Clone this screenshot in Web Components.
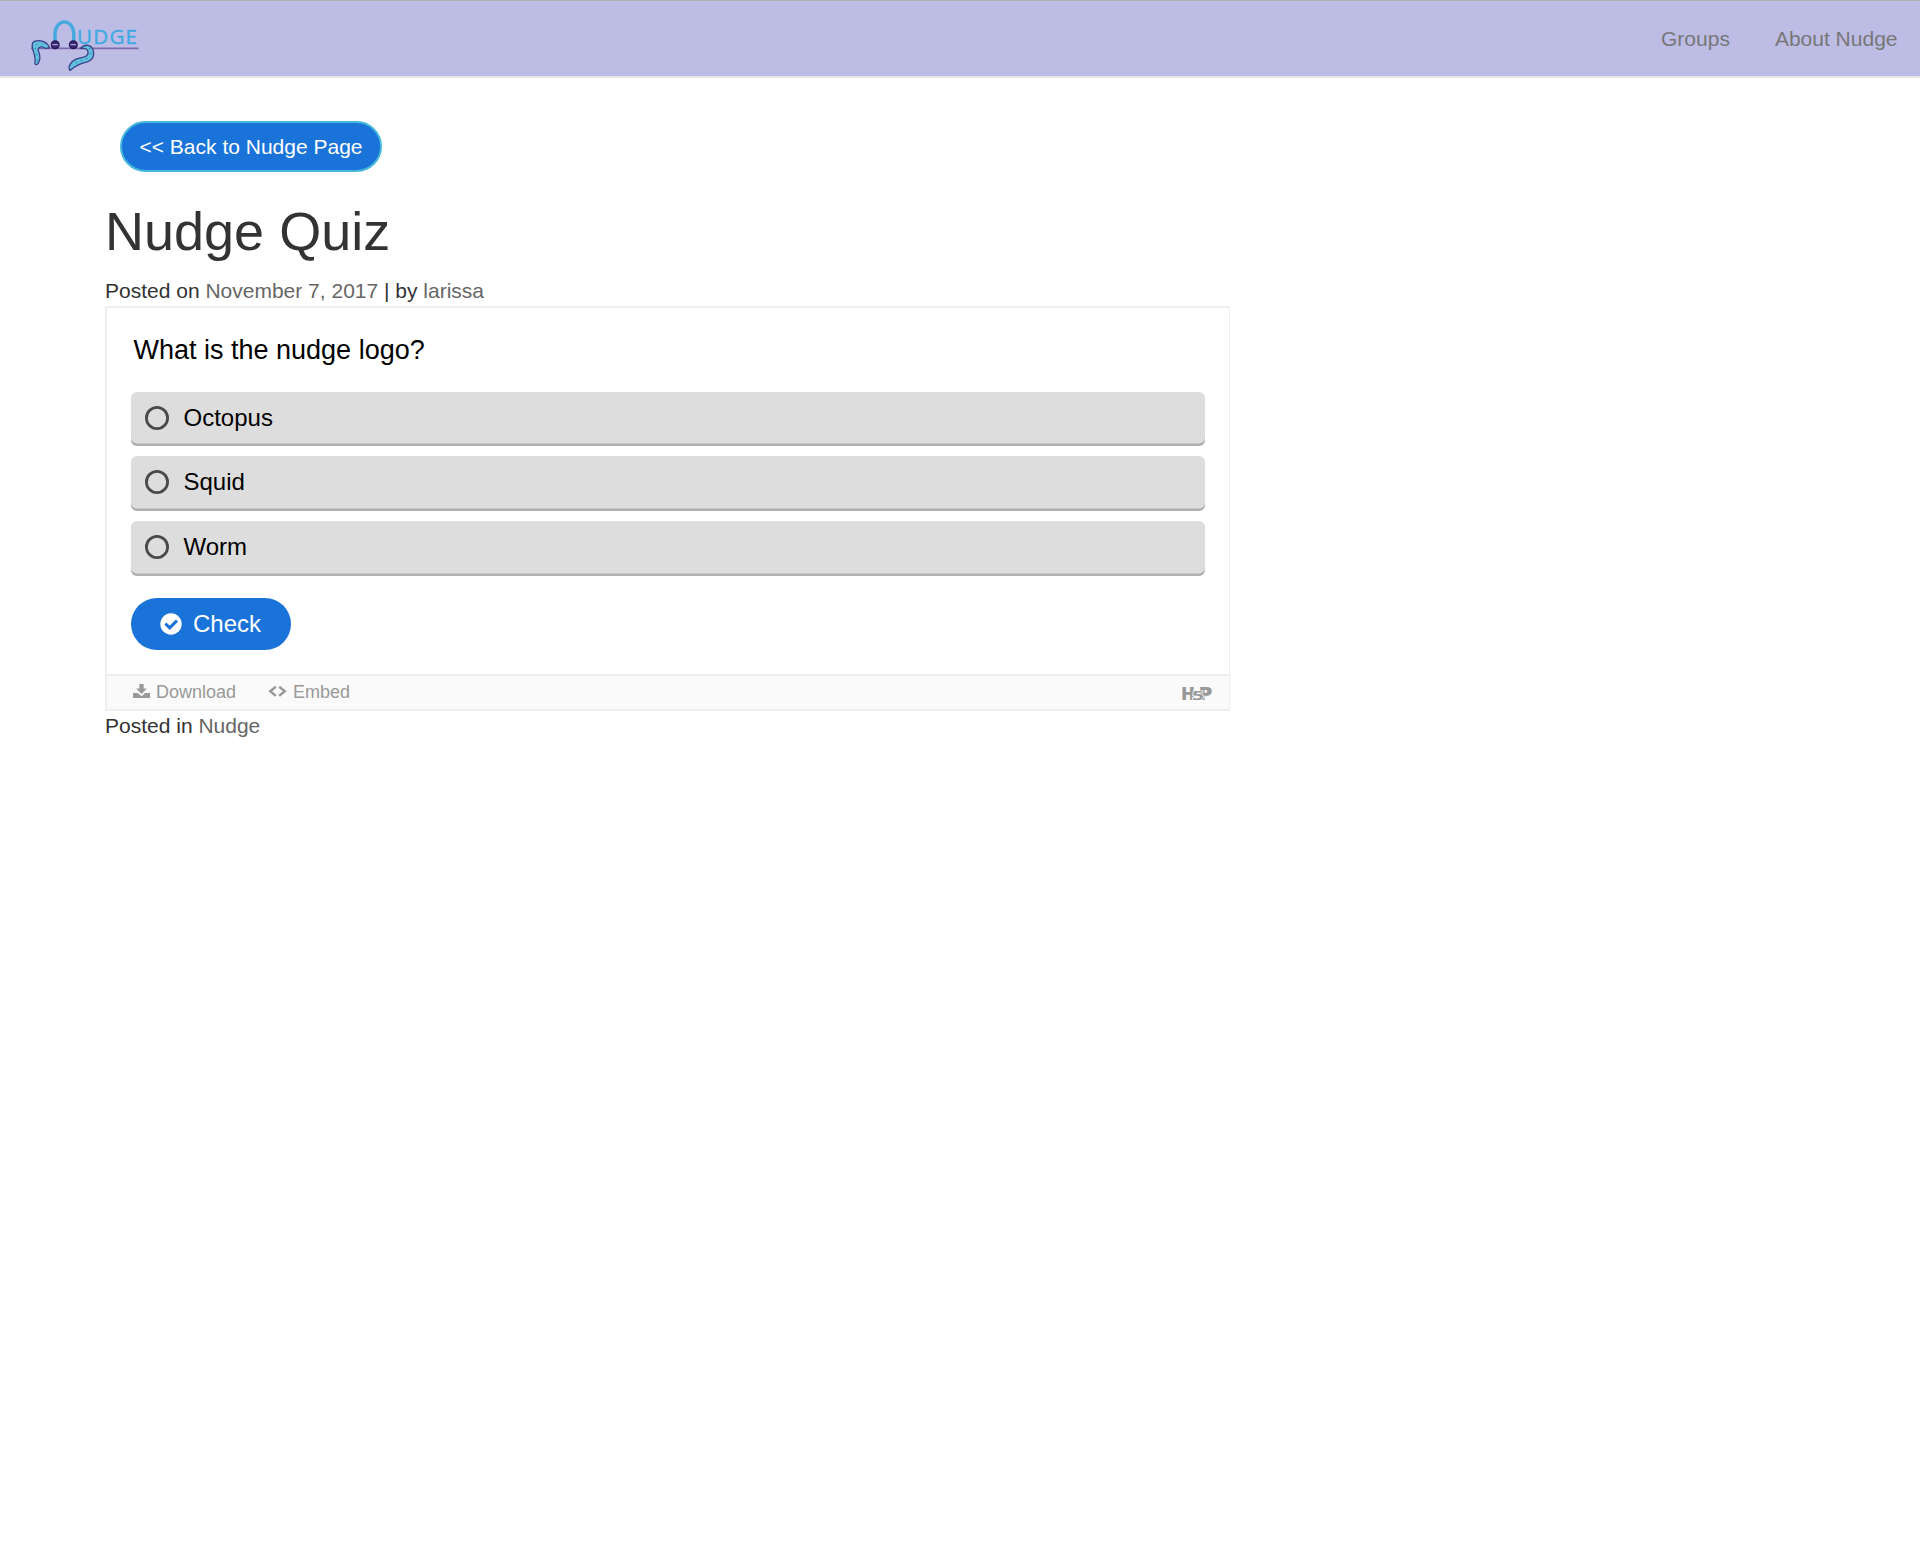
<!DOCTYPE html>
<html lang="en"><head><meta charset="utf-8"><title>Nudge Quiz</title>
<style>
html,body{margin:0;background:#fff}
body{font:21px/30px "Liberation Sans",Arial,sans-serif;color:#333;min-height:1554px}
</style></head><body>
<nudge-page></nudge-page>
<script>
const define=(name,css,html)=>customElements.define(name,class extends HTMLElement{
  connectedCallback(){
    if(this.shadowRoot)return;
    this.attachShadow({mode:'open'}).innerHTML='<style>*{box-sizing:border-box}'+css+'</style>'+html;
  }
});

define('nudge-logo',':host{display:block;width:130px;height:70px}svg{display:block}',`
<svg width="130" height="70" viewBox="20 6 130 70" fill="none">
  <path d="M31 48.3H138.5" stroke="#7d6bb0" stroke-width="1.8"/>
  <path d="M55 42V35C55 17.5 73.8 17.5 73.8 35V42" stroke="#45a9e0" stroke-width="3.4"/>
  <text x="77" y="43.5" font-family="Open Sans, sans-serif" font-size="20.5" textLength="60" fill="#3fa9e3" stroke="#3fa9e3" stroke-width=".4">UDGE</text>
  <g fill="#62c0de" stroke="#3a4189" stroke-width="1.3" stroke-linejoin="round">
    <path d="M49.5 47.8C47 42 41 39.6 35 41.1C31.4 42 31.8 46 33 50C34.5 55 36 59 34.8 62.5C34.8 65 36.5 65.2 38 63.5C40.8 60 39.8 54 38 49.5C38.5 46.3 42.5 46 45 48.3Z"/>
    <path d="M80.5 48.5C84 44 90.5 44 92.9 49.5C95.5 57 91.5 61 84.5 62.7C77.5 64.5 74 67 70 70.4C67.5 67.5 70.5 61.5 75.5 59.3C81.5 57 89 57.5 88 51.5C87 48 84 48.3 80.5 48.5Z"/>
  </g>
  <path d="M36 44L37 45M35 48L36 49M36 54L37 55M37 60L38 61M42 44L43 44.5M89 48L90 49M91 53L90 54M87 58L86 59M82 60L81 61M77 62L76 63" stroke="#3988b8" stroke-width="1.2"/>
  <g fill="#39276f" stroke="#271657" stroke-width="1.2"><circle cx="55.2" cy="44.8" r="3.9"/><circle cx="73.3" cy="44.8" r="3.9"/></g>
  <path d="M52.3 44.6H58M70.4 44.6H76" stroke="#aaa0d6" stroke-width="1.4"/>
</svg>`);

define('nudge-header',`:host{display:flex;height:78px;background:#bdbce4;border-top:1px solid #b2b2b2;border-bottom:2px solid #e7e7e7;justify-content:space-between;padding:5px 22.5px 0 20px}
nav{display:flex;gap:45px;padding-top:18px;color:#777}`,`<nudge-logo></nudge-logo><nav><slot></slot></nav>`);

define('back-button',`:host{display:flex;width:262px;height:51px;margin:43px 0 0 15px;border:2px solid #46b8da;border-radius:26px;background:#1a73d9;color:#fff;align-items:center;justify-content:center;white-space:nowrap}`,`<slot></slot>`);

define('quiz-option',`:host{display:flex;height:55px;align-items:center;gap:14.5px;padding:0 14px 3px;border-radius:6px;background:#ddd;box-shadow:inset 0 -2.5px 0 #b0b0b0;color:#000;font-size:24px}
:host(:first-of-type){height:54px}
svg{flex:none}`,`<svg width="24" height="24" viewBox="0 0 24 24"><circle cx="12" cy="12" r="10.6" fill="none" stroke="#494949" stroke-width="2.8"/></svg><span><slot></slot></span>`);

define('check-button',`:host{display:flex;width:160px;height:52px;border-radius:26px;background:#1a73d9;color:#fff;font-size:24px;align-items:center;padding-left:29px;gap:11px}`,`
<svg width="22" height="22" viewBox="0 0 22 22"><circle cx="11" cy="11" r="10.7" fill="#fff"/><path d="M5.4 10.6L9.7 14.8L17 7.7" fill="none" stroke="#1a73d9" stroke-width="3"/></svg><span><slot></slot></span>`);

define('h5p-bar',`:host{display:flex;height:35px;border-top:2px solid #eee;background:#fafafa;color:#999;font-size:18px;line-height:30px;padding:1px 17px 0 26px;align-items:flex-start}
.a{display:flex;gap:6px;margin-right:32px}.logo{margin-left:auto}svg{display:block}`,`
<span class="a"><svg width="17" height="30" viewBox="0 0 17 30" fill="#999"><path d="M6.4 7h4.2v4.6h3.3L8.5 17 3.1 11.6h3.3zM0 16h4.8l3.7 3.2 3.7-3.2H17v5H0z"/></svg>Download</span>
<span class="a"><svg width="19" height="30" viewBox="0 0 19 30" fill="none" stroke="#999" stroke-width="2.4"><path d="M7.8 9.7L2.2 14.2L7.8 18.9M11.2 9.7L16.8 14.2L11.2 18.9"/></svg>Embed</span>
<svg class="logo" width="30" height="30" viewBox="0 0 30 30" fill="#999" font-family="Open Sans, sans-serif" font-weight="800"><text x="-1" y="22.7" font-size="17.5" textLength="14" lengthAdjust="spacingAndGlyphs">H</text><text x="16.5" y="22.7" font-size="17.5" textLength="14" lengthAdjust="spacingAndGlyphs">P</text><text x="10" y="22.7" font-size="13" font-weight="700" textLength="12" lengthAdjust="spacingAndGlyphs" stroke="#fafafa" stroke-width="1.2" paint-order="stroke">5</text></svg>`);

define('quiz-card',`:host{display:block;width:1125px;height:405px;border:2px solid #eee;border-right-width:1px}
.in{height:366px;padding:23px 24px 0}.q{font-size:27px;line-height:38px;color:#000;padding-left:2.5px;margin-bottom:23px}
.o{display:flex;flex-direction:column;gap:10px;margin-bottom:22px}`,`
<div class="in"><div class="q"><slot name="question"></slot></div>
<div class="o"><slot></slot></div><check-button>Check</check-button></div><h5p-bar></h5p-bar>`);

define('nudge-page',`:host{display:block}main{padding-left:105px}h1{font-size:54px;font-weight:400;line-height:60px;margin:29px 0 15px}
p{margin:0;line-height:30px}a{color:#666}`,`
<nudge-header><span>Groups</span><span>About Nudge</span></nudge-header>
<main><back-button>&lt;&lt; Back to Nudge Page</back-button>
<h1>Nudge Quiz</h1>
<p>Posted on <a>November 7, 2017</a> | by <a>larissa</a></p>
<quiz-card><span slot="question">What is the nudge logo?</span><quiz-option>Octopus</quiz-option><quiz-option>Squid</quiz-option><quiz-option>Worm</quiz-option></quiz-card>
<p>Posted in <a>Nudge</a></p></main>`);
</script></body></html>
